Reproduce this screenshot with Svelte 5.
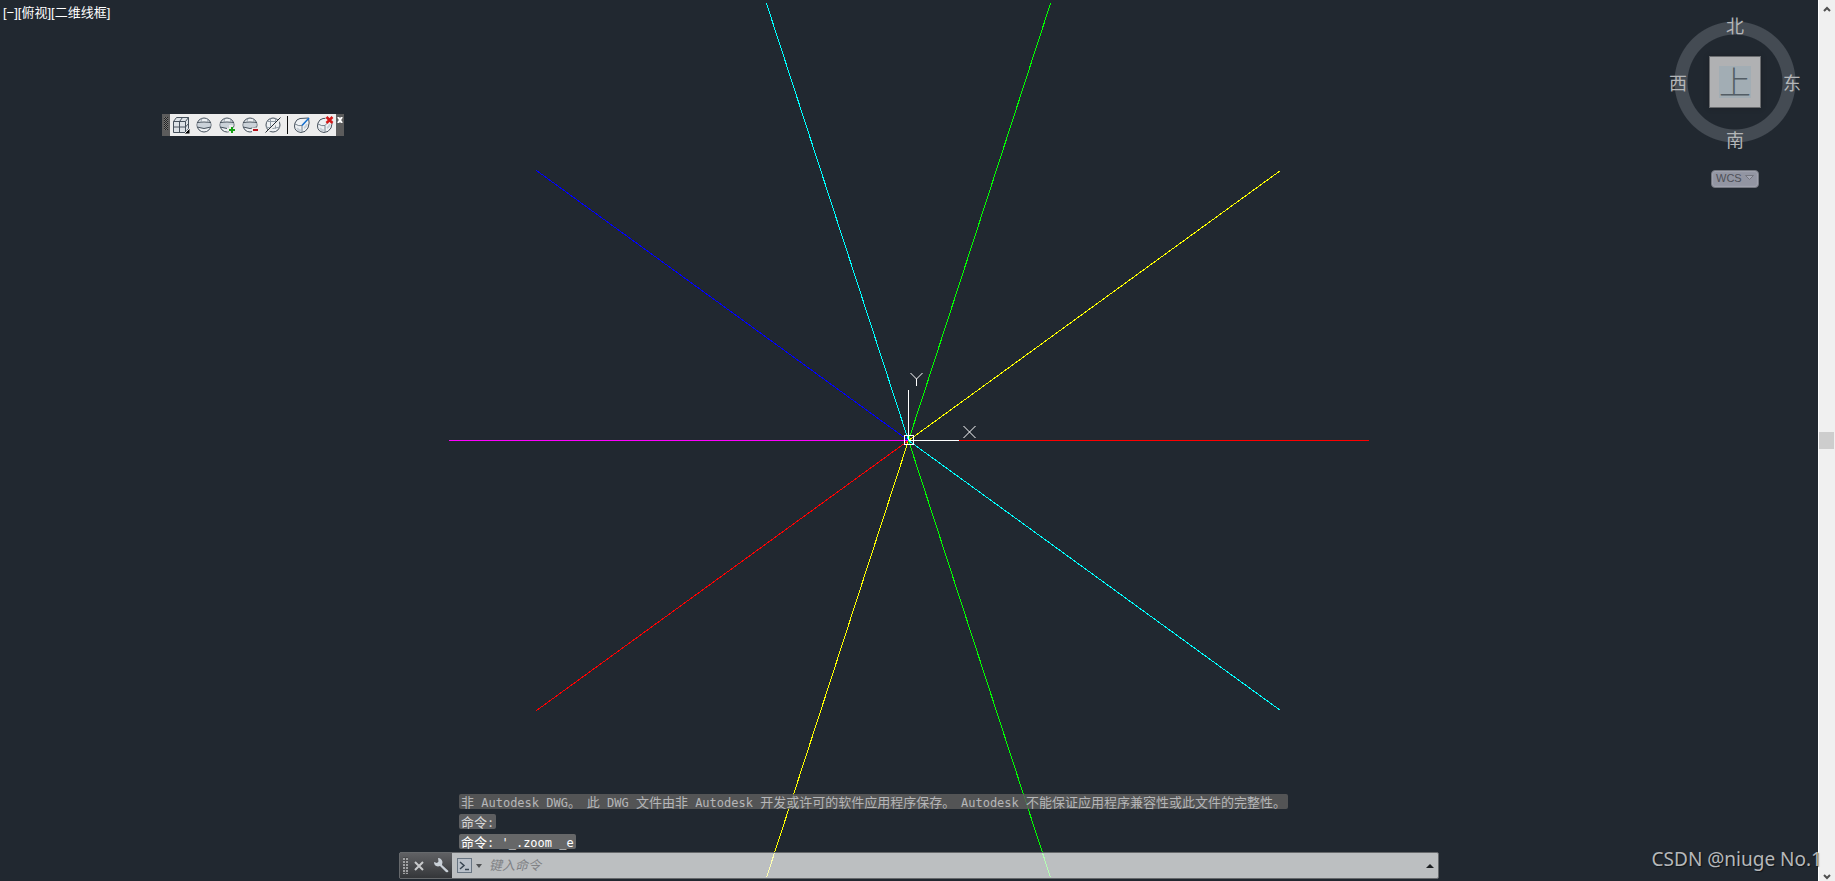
<script>
  const lineColors = ["#f00", "#ff0", "#0f0", "#0ff", "#00f", "#f0f", "#f00", "#ff0", "#0f0", "#0ff"];
  const radius = 460;

  // ten rays, 36 degrees apart, counter-clockwise from the X axis
  const rays = lineColors.map((color, i) => {
    const angle = (i * Math.PI) / 5;
    return {
      color,
      x: Math.round(Math.cos(angle) * radius),
      y: Math.round(-Math.sin(angle) * radius),
    };
  });

  const viewControls = ["[−]", "[俯视]", "[二维线框]"];

  const tools = [
    { id: "box", label: "Box" },
    { id: "sphere", label: "Sphere" },
    { id: "add", label: "Add" },
    { id: "remove", label: "Remove" },
    { id: "none", label: "None" },
    { id: "edge", label: "Edge" },
    { id: "delete", label: "Delete" },
  ];

  let command = "";
</script>

<div class="app">
  <main class="canvas">
    <svg class="drawing" width="2" height="2" shape-rendering="crispEdges">
      <g transform="translate(-0.5 0.5)">
        {#each rays as ray}
          <line x1="0" y1="0" x2={ray.x} y2={ray.y} stroke={ray.color} />
        {/each}
      </g>
      <g stroke="#fff" fill="none">
        <path d="M-0.5 0V-50M0 0.5H50" />
        <rect x="-4.5" y="-4.5" width="9" height="9" />
        <g shape-rendering="auto">
          <path d="M1.500 -67l6 6 6-6M7.500 -61v7" />
          <path d="M54.500 -14l12 12M66.500 -14l-12 12" />
        </g>
      </g>
    </svg>

    <nav class="view-controls">
      {#each viewControls as text}
        <button>{text}</button>
      {/each}
    </nav>

    <div class="toolbar">
      <span class="toolbar__grip"></span>
      <div class="toolbar__items">
        {#each tools as tool (tool.id)}
          {#if tool.id === "edge"}
            <span class="toolbar__separator"></span>
          {/if}
          <button aria-label={tool.label}>
            <svg width="18" height="18" viewBox="0 0 18 18" fill="none" stroke="#46515c">
              {#if tool.id === "box"}
                <path fill="#dde2e7" d="M1.500 5.500l3-4h12v11l-3 4h-12zM1.500 5.500h12v11M13.500 5.500l3-4M7.500 5.500v11M1.500 11h12l3-3.500M7.500 5.500l3-4" />
                <path fill="#000" stroke="#ededed" d="M18 12v6h-6z" />
              {:else if tool.id === "edge" || tool.id === "delete"}
                <path fill="#eef1f4" d="M2 7Q3.500 3 7 2.500L15.500 2Q17 7 15 12Q12.500 16.500 8 16.500Q1.500 15.500 1.500 10z" />
                <path stroke="#77838e" d="M2 8q4 2.500 7 1.500V16M9 9.500l6.500-7" />
                <path stroke="#c6cfd7" stroke-width="2" d="M4 12q2 3 4 2M11 12q2-1 3-4" />
                {#if tool.id === "edge"}
                  <path stroke="#1672d2" stroke-width="1.500" d="M9 9.500l7-7.500" />
                {:else}
                  <path stroke="#ededed" stroke-width="4" d="M10.500 1l6 6M16.500 1l-6 6" />
                  <path stroke="#d31919" stroke-width="2.500" d="M10.500 1l6 6M16.500 1l-6 6" />
                {/if}
              {:else if tool.id === "none"}
                <circle cx="9" cy="9" r="7" fill="#eef1f4" />
                <path stroke="#909ba5" d="M3 5.500h12M2 11q7 3 14 0M6.500 2.500v8M11.500 2.500v10" />
                <path stroke="#ededed" stroke-width="2" d="M2 17.500L17 2.500" />
                <path stroke="#222a32" d="M1.500 16.500l15-15" />
              {:else}
                <circle cx="9" cy="9" r="7" fill="#eef1f4" />
                <path fill="#cbd2d9" stroke="none" d="M2.500 7q6.500-1 13 0v4q-6.500 3-13 0z" />
                <path d="M2 6.500q7-1 14 0M2 11q7 3 14 0" />
                <path stroke="#909ba5" d="M7 2.500q-1 2-1 4M12 2.500q1 2 1 4" />
                {#if tool.id === "add"}
                  <path stroke="#ededed" stroke-width="4" d="M13 9v9M9 13.500h9" />
                  <path stroke="#14a014" stroke-width="2" d="M14 11v6M11 14h6" />
                {:else if tool.id === "remove"}
                  <path stroke="#ededed" stroke-width="5" d="M11 14h7" />
                  <path stroke="#b40e18" stroke-width="2" d="M12 14h5" />
                {/if}
              {/if}
            </svg>
          </button>
        {/each}
      </div>
      <button class="toolbar__close" aria-label="Close">
        <svg width="6" height="6" viewBox="0 0 6 6" stroke="#fff" stroke-width="2"><path d="M1 0l4 6M5 0L1 6" /></svg>
      </button>
    </div>

    <div class="navigator">
      <div class="compass">
        <button class="north">北</button>
        <button class="west">西</button>
        <button class="face"><span>上</span></button>
        <button class="east">东</button>
        <button class="south">南</button>
      </div>
      <button class="wcs">
        WCS
        <svg width="9" height="6" viewBox="0 0 9 6" fill="#a5a8b5" stroke="#74767f"><path d="M.5 .5h8l-4 4z" /></svg>
      </button>
    </div>

    <section class="console">
      <div class="history">
        <p>非<span>{" Autodesk DWG"}</span>。{"  "}此<span>{" DWG "}</span>文件由非<span>{" Autodesk "}</span>开发或许可的软件应用程序保存。{"  "}<span>{"Autodesk "}</span>不能保证应用程序兼容性或此文件的完整性。</p>
        <p class="recent">命令<span>:</span></p>
        <p class="latest">命令<span>: '_.zoom _e</span></p>
      </div>
      <div class="command">
        <div class="command__tools">
          <span class="command__grip"></span>
          <button aria-label="Close command line">
            <svg width="10" height="10" viewBox="0 0 10 10" stroke="#c8cacc" stroke-width="2"><path d="M1 1l8 8M9 1L1 9" /></svg>
          </button>
          <button aria-label="Customize">
            <svg width="15" height="15" viewBox="0 0 15 15">
              <path fill="#c9d0d7" d="M4 0L4.500 3.500 3 5 0 4Q0 8 4 8.500L6 8l6 6q2 1 2.500-1L8 7l.5-3Q7.500 0 4 0z" />
            </svg>
          </button>
        </div>
        <button class="command__recent" aria-label="Recent commands">
          <svg width="15" height="15" viewBox="0 0 15 15" fill="#b9c0c9" stroke="#687582">
            <rect x=".5" y=".5" width="14" height="14" />
            <path fill="none" stroke="#394653" stroke-width="1.500" d="M3 4l4 3.500L3 11M8 11.500h4" />
          </svg>
          <svg width="6" height="4" viewBox="0 0 6 4"><path fill="#505254" d="M0 0h6L3 4z" /></svg>
        </button>
        <input aria-label="命令" placeholder="键入命令" bind:value={command} />
        <button class="command__expand" aria-label="Expand history">
          <svg width="8" height="4" viewBox="0 0 8 4"><path fill="#1d2023" d="M4 0l4 4H0z" /></svg>
        </button>
      </div>
    </section>
  </main>

  <aside class="scrollbar">
    <button aria-label="Scroll up">
      <svg width="8" height="6" viewBox="0 0 8 6" fill="none" stroke="#505050" stroke-width="2"><path d="M1 5l3-3 3 3" /></svg>
    </button>
    <span class="scrollbar__thumb"></span>
    <button aria-label="Scroll down">
      <svg width="8" height="6" viewBox="0 0 8 6" fill="none" stroke="#505050" stroke-width="2"><path d="M1 1l3 3 3-3" /></svg>
    </button>
  </aside>

  <span class="watermark">CSDN @niuge No.1</span>
</div>

<style>
  :global(body) {
    margin: 0;
    background: #212830;
  }

  .app {
    position: relative;
    display: flex;
    height: 100vh;
    overflow: hidden;
    font-family: "Noto Sans CJK SC", sans-serif;
  }

  button {
    margin: 0;
    padding: 0;
    border: none;
    background: none;
    color: inherit;
    font: inherit;
  }

  svg {
    display: block;
  }

  .canvas {
    position: relative;
    flex: 1;
    background: #212830;
  }

  .drawing {
    position: absolute;
    top: calc(50% - 1px);
    left: 50%;
    overflow: visible;
  }

  .view-controls {
    position: absolute;
    top: 4px;
    left: 3px;
    display: flex;
    color: #fff;
    font-family: "Liberation Sans", "Noto Sans CJK SC", sans-serif;
    font-size: 13px;
    line-height: 18px;
  }

  .toolbar {
    position: absolute;
    top: 114px;
    left: 162px;
    display: flex;
    height: 22px;
    background: #5c5c5c;
  }

  .toolbar__grip {
    width: 4px;
    margin: 3px 2px 6px;
    background: repeating-conic-gradient(#222 0 25%, #777 0 50%) 0 0 / 2px 2px;
  }

  .toolbar__items {
    display: flex;
    align-items: center;
    gap: 5px;
    padding: 0 2px;
    background: #ededed;
  }

  .toolbar__separator {
    width: 1px;
    height: 18px;
    background: #111;
  }

  .toolbar__close {
    display: flex;
    width: 8px;
    padding: 3px 1px;
  }

  .navigator {
    position: absolute;
    top: 15px;
    right: 16px;
    display: flex;
    flex-direction: column;
    align-items: center;
    gap: 21px;
  }

  .compass {
    display: grid;
    grid-template-columns: 20px 94px 20px;
    grid-template-rows: 20px 94px 20px;
    place-items: center;
    color: #b4b6b8;
    font-size: 18px;
    line-height: 20px;
    background: radial-gradient(circle, transparent 47px, #444b53 48px, #444b53 60px, transparent 61px);
  }

  .north {
    grid-area: 1 / 2;
  }

  .west {
    grid-area: 2 / 1;
  }

  .east {
    grid-area: 2 / 3;
  }

  .south {
    grid-area: 3 / 2;
  }

  .face {
    grid-area: 2 / 2;
    display: grid;
    place-items: center;
    box-sizing: border-box;
    width: 52px;
    height: 52px;
    border: 1px solid #696b6e;
    background: #b0b1b3;
    box-shadow: 0 0 4px #1b2026;
  }

  .face span {
    width: 32px;
    height: 32px;
    background: #a2adb4;
    color: #535d65;
    font-size: 32px;
    font-weight: 300;
    line-height: 28px;
  }

  .wcs {
    display: flex;
    align-items: center;
    justify-content: space-between;
    box-sizing: border-box;
    width: 48px;
    height: 18px;
    padding: 0 4px 2px;
    border: 1px solid #73767f;
    border-radius: 4px;
    background: #9295a2;
    box-shadow: inset 0 0 2px #c0c2cc;
    color: #4e5057;
    font: 11px "Liberation Sans", sans-serif;
  }

  .console {
    position: absolute;
    right: 379px;
    bottom: 2px;
    left: 399px;
  }

  .history {
    display: flex;
    flex-direction: column;
    align-items: flex-start;
    gap: 5px;
    margin: 0 0 3px 60px;
    color: #b5b6b8;
    font-size: 13px;
    line-height: 15px;
  }

  .history p {
    height: 15px;
    margin: 0;
    padding: 0 2px;
    border-radius: 2px;
    background: rgba(92, 92, 92, 0.85);
    white-space: pre;
  }

  .history span {
    font-family: "DejaVu Sans Mono", monospace;
    font-size: 12px;
  }

  .history .recent {
    background: #5d5e60;
    color: #d5d6d7;
  }

  .history .latest {
    background: #666768;
    color: #fff;
  }

  .command {
    display: flex;
    box-sizing: border-box;
    height: 27px;
    border: 1px solid #66696c;
    border-radius: 2px;
    background: rgba(255, 255, 255, 0.7);
  }

  .command__tools {
    display: flex;
    align-items: center;
    gap: 10px;
    padding: 0 3px;
    background: linear-gradient(#606164, #343639);
  }

  .command__grip {
    width: 5px;
    height: 17px;
    margin-right: -4px;
    background: repeating-linear-gradient(#4a4b4d 0 1px, transparent 1px 3px),
      repeating-linear-gradient(90deg, #a0a1a3 0 2px, #4a4b4d 2px 3px);
  }

  .command__recent {
    display: flex;
    align-items: center;
    gap: 4px;
    padding: 0 7px 0 5px;
  }

  .command input {
    flex: 1;
    min-width: 0;
    padding: 0 0 2px;
    border: none;
    outline: none;
    background: none;
    font: italic 13px "Noto Sans CJK SC", sans-serif;
  }

  .command input::placeholder {
    color: #808285;
  }

  .command__expand {
    padding: 0 4px;
  }

  .scrollbar {
    display: flex;
    flex-direction: column;
    align-items: center;
    justify-content: space-between;
    box-sizing: border-box;
    width: 17px;
    padding: 6px 0 1px;
    border-left: 1px solid #fff;
    background: #f0f0f0;
  }

  .scrollbar__thumb {
    width: 15px;
    height: 17px;
    margin: 0 1px 6px 0;
    background: #cdcdcd;
  }

  .watermark {
    position: absolute;
    right: 13px;
    bottom: 8px;
    color: #b6b8ba;
    font-family: "Noto Sans", sans-serif;
    font-size: 19px;
    line-height: 28px;
    text-shadow: 1px 1px 1px rgba(0, 0, 0, 0.5);
  }
</style>
